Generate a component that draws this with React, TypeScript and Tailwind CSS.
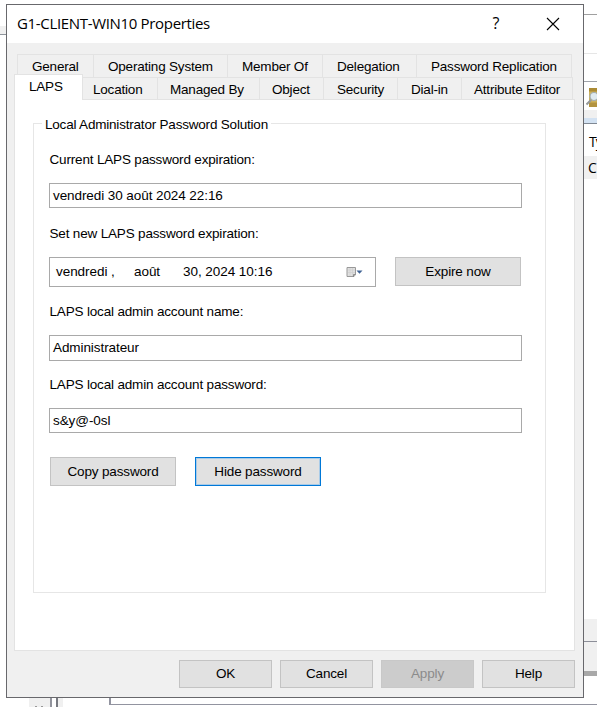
import type { ReactNode } from 'react';

const upperTabs = [
  { label: 'General', box: 'w-[76px] pl-[14px]' },
  { label: 'Operating System', box: 'w-[134px] pl-[14px]' },
  { label: 'Member Of', box: 'w-[95px] pl-[14px]' },
  { label: 'Delegation', box: 'w-[94px] pl-[14px]' },
  { label: 'Password Replication', box: 'w-[155px] pl-[14px]' },
];

const lowerTabs = [
  { label: 'Location', box: 'w-[75px] pl-[10px]' },
  { label: 'Managed By', box: 'w-[102px] pl-[12px]' },
  { label: 'Object', box: 'w-[64px] pl-[12px]' },
  { label: 'Security', box: 'w-[74px] pl-[13px]' },
  { label: 'Dial-in', box: 'w-[64px] pl-[13px]' },
  { label: 'Attribute Editor', box: 'w-[111px] pl-[12px]' },
];

function Button({ children, className }: { children: ReactNode; className: string }) {
  return (
    <button className={`flex shrink-0 items-center justify-center whitespace-nowrap border pt-[1px] tracking-[-0.15px] ${className}`}>
      {children}
    </button>
  );
}

function Label({ children, className }: { children: ReactNode; className: string }) {
  return (
    <div className={`ml-[0.5px] h-[16px] whitespace-nowrap leading-[16px] tracking-[-0.17px] ${className}`}>{children}</div>
  );
}

function Field({ children, className }: { children: ReactNode; className: string }) {
  return (
    <div className={`flex w-[473px] items-center whitespace-nowrap border border-[#a9a9a9] bg-white pl-[3px] tracking-[-0.08px] ${className}`}>
      {children}
    </div>
  );
}

function CalendarIcon() {
  return (
    <svg className="mr-[12px] ml-auto" width="17" height="12" viewBox="0 0 17 12">
      <path d="M1 1.5h8.5v7L8 10.5H1z" fill="#e0e0e0" stroke="#999" />
      <path d="M2 4h7M2 6.5h7M4 2v8M6.5 2v8" stroke="#cfcfcf" strokeWidth=".7" />
      <path d="M7.5 10.5V8.5h2" fill="none" stroke="#777" strokeWidth=".8" />
      <path d="M10.5 4.5h6L13.5 7.8z" fill="#3f6294" />
    </svg>
  );
}

function SearchFolderIcon() {
  return (
    <svg width="11" height="19" viewBox="0 0 11 19">
      <path d="M3 0h8v19H3z" fill="#cdb25c" />
      <path d="M3 0h8v3.5H3z" fill="#ab8b35" />
      <path d="M3 14.5h8V19H3z" fill="#b2933f" />
      <circle cx="8" cy="8.5" r="4" fill="#dfeaf0" stroke="#a2adb0" strokeWidth="1.2" />
      <path d="M5 12l-4.5 4.5" stroke="#949899" strokeWidth="2" />
    </svg>
  );
}

function Dialog() {
  return (
    <div className="flex h-[694px] w-[578px] flex-col border border-[#68686c] bg-[#f0f0f0]">
      <div className="flex h-[38px] shrink-0 items-center bg-white pl-[10px] text-black">
        <span className="-mt-[1px] w-[200px] whitespace-nowrap font-['Open_Sans','Noto_Sans',sans-serif] text-[15px] tracking-[-0.33px]">
          G1-CLIENT-WIN10 Properties
        </span>
        <span className="-mt-[2px] ml-[274px] w-[10px] text-center font-['Open_Sans','Noto_Sans',sans-serif] text-[16px]">?</span>
        <svg className="ml-[45px]" width="14" height="14" viewBox="0 0 14 14">
          <path d="M1 1l12 12M13 1L1 13" stroke="#000" strokeWidth="1.1" fill="none" />
        </svg>
      </div>

      <div className="mt-[11px] ml-[10px] flex h-[23px] w-[555px] shrink-0 border-t border-l border-[#e3e3e3] tracking-[-0.2px]">
        {upperTabs.map((tab) => (
          <div key={tab.label} className={`shrink-0 whitespace-nowrap border-r border-[#e3e3e3] leading-[24px] ${tab.box}`}>
            {tab.label}
          </div>
        ))}
      </div>
      <div className="ml-[7px] flex h-[22px] shrink-0 tracking-[-0.2px]">
        <div className="relative z-10 -mt-[3px] h-[26px] w-[69px] shrink-0 border border-b-0 border-[#e3e3e3] bg-white pl-[14px] leading-[24px]">
          LAPS
        </div>
        {lowerTabs.map((tab) => (
          <div key={tab.label} className={`shrink-0 whitespace-nowrap border-t border-r border-[#e3e3e3] leading-[23px] ${tab.box}`}>
            {tab.label}
          </div>
        ))}
      </div>

      <div className="ml-[7px] h-[552px] w-[561px] shrink-0 border border-[#e3e3e3] bg-white pt-[23px] pl-[18px]">
        <div className="flex h-[470px] w-[513px] flex-col items-start border border-[#e6e6e6] pl-[15px]">
          <div className="-mt-[7px] -ml-[7px] h-[16px] whitespace-nowrap bg-white px-[3px] leading-[16px] tracking-[-0.2px]">
            Local Administrator Password Solution
          </div>
          <Label className="mt-[19px]">Current LAPS password expiration:</Label>
          <Field className="mt-[15px] h-[25px] pt-[1px]">vendredi 30 août 2024 22:16</Field>
          <Label className="mt-[18px]">Set new LAPS password expiration:</Label>
          <div className="mt-[15px] flex">
            <div className="flex h-[30px] w-[327px] items-center border border-[#a9a9a9] pl-[6px] tracking-[-0.05px]">
              <span className="w-[78px]">vendredi ,</span>
              <span className="w-[49px]">août</span>
              <span>30, 2024 10:16</span>
              <CalendarIcon />
            </div>
            <Button className="ml-[19px] h-[29px] w-[126px] border-[#c3c3c3] bg-[#e1e1e1]">Expire now</Button>
          </div>
          <Label className="mt-[17px]">LAPS local admin account name:</Label>
          <Field className="mt-[15px] h-[26px]">Administrateur</Field>
          <Label className="mt-[16px]">LAPS local admin account password:</Label>
          <Field className="mt-[15px] h-[25px] pt-[1px]">s&amp;y@-0sl</Field>
          <div className="mt-[24px] flex gap-[19px] pl-[1px]">
            <Button className="h-[29px] w-[126px] border-[#c3c3c3] bg-[#e1e1e1]">Copy password</Button>
            <Button className="h-[29px] w-[126px] border-[#0078d7] bg-[#e1e1e1] shadow-[inset_0_0_0_1px_#a9cbe8]">Hide password</Button>
          </div>
        </div>
      </div>

      <div className="mt-[9px] flex justify-end gap-[8px] pr-[8px]">
        <Button className="h-[28px] w-[93px] border-[#c3c3c3] bg-[#e1e1e1]">OK</Button>
        <Button className="h-[28px] w-[93px] border-[#c3c3c3] bg-[#e1e1e1]">Cancel</Button>
        <Button className="h-[28px] w-[93px] border-[#c8c8c8] bg-[#cccccc] text-[#8b8b8b]">Apply</Button>
        <Button className="h-[28px] w-[93px] border-[#c3c3c3] bg-[#e1e1e1]">Help</Button>
      </div>
    </div>
  );
}

export default function App() {
  return (
    <div className="flex h-[707px] w-[597px] flex-col overflow-hidden bg-white font-['Liberation_Sans',Arial,sans-serif] text-[13.5px] text-black">
      <div className="flex h-[698px] shrink-0">
        <div className="w-[6px] shrink-0 pt-[26px]">
          <div className="h-[9px] border-b border-[#8f959c] bg-[#f0f0f0]" />
        </div>
        <div className="shrink-0 pt-[4px]">
          <Dialog />
        </div>
        <div className="w-[13px] shrink-0 overflow-hidden font-['Open_Sans','Noto_Sans',sans-serif] text-[14px]">
          <div className="h-[15px] border-b border-[#a0a0a0]" />
          <div className="h-[39px] border-b border-[#e6e6e6]" />
          <div className="h-[28px] border-b border-[#a0a4ab]" />
          <div className="h-[28px] pt-[6px] pl-[2px]">
            <SearchFolderIcon />
          </div>
          <div className="h-[8px] bg-[#f0f0f0]" />
          <div className="h-[6px] border-b border-[#7f8893] bg-[#d3e2f2]" />
          <div className="h-[32px] pl-[5px] leading-[36px] tracking-[-1px]">Ty</div>
          <div className="h-[23px] bg-[#f0f0f0] pl-[4px] leading-[24px]">C</div>
          <div className="h-[440px]" />
          <div className="h-[23px] border-b border-[#8c8e98] bg-[#f0f0f0]" />
          <div className="h-[29px] bg-[#f0f0f0]" />
          <div className="h-[5px] bg-[#a8a8a8]" />
        </div>
      </div>
      <div className="flex h-[9px] shrink-0">
        <div className="ml-[29px] flex h-full w-[34px] bg-[#f0f0f0]">
          <div className="flex w-[20px] items-end gap-[4px] pl-[6px]">
            <span className="h-[1px] w-[2px] bg-[#999]" />
            <span className="h-[1px] w-[2px] bg-[#999]" />
          </div>
          <div className="ml-[1px] w-[2px] bg-[#92949d]" />
          <div className="w-[4px] bg-white" />
          <div className="w-[2px] bg-[#777980]" />
        </div>
        <div className="ml-[46px] h-[7px] w-[488px] border-b border-l-2 border-[#9294a0]" />
      </div>
    </div>
  );
}
